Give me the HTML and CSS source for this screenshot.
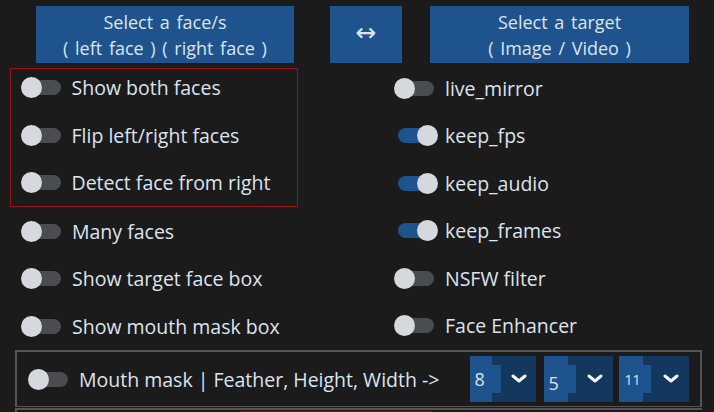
FILE: index.html
```html
<!DOCTYPE html>
<html>
<head>
<meta charset="utf-8">
<link rel="stylesheet" href="styles.css">
</head>
<body>
<div class="top">
  <div class="btn btn-wide">Select a face/s<br>( left face ) ( right face )</div>
  <div class="btn btn-swap">&#8596;</div>
  <div class="btn btn-wide btn-target">Select a target<br>( Image / Video )</div>
</div>
<div class="main">
  <div class="col col-left">
    <div class="redbox">
      <div class="row"><span class="sw"><span class="knob"></span></span><span class="lbl">Show both faces</span></div>
      <div class="row"><span class="sw"><span class="knob"></span></span><span class="lbl">Flip left/right faces</span></div>
      <div class="row"><span class="sw"><span class="knob"></span></span><span class="lbl">Detect face from right</span></div>
    </div>
    <div class="rows-out">
      <div class="row"><span class="sw"><span class="knob"></span></span><span class="lbl">Many faces</span></div>
      <div class="row"><span class="sw"><span class="knob"></span></span><span class="lbl">Show target face box</span></div>
      <div class="row"><span class="sw"><span class="knob"></span></span><span class="lbl">Show mouth mask box</span></div>
    </div>
  </div>
  <div class="col col-right">
    <div class="row"><span class="sw"><span class="knob"></span></span><span class="lbl">live_mirror</span></div>
    <div class="row"><span class="sw on"><span class="knob"></span></span><span class="lbl">keep_fps</span></div>
    <div class="row"><span class="sw on"><span class="knob"></span></span><span class="lbl">keep_audio</span></div>
    <div class="row"><span class="sw on"><span class="knob"></span></span><span class="lbl">keep_frames</span></div>
    <div class="row"><span class="sw"><span class="knob"></span></span><span class="lbl">NSFW filter</span></div>
    <div class="row"><span class="sw"><span class="knob"></span></span><span class="lbl">Face Enhancer</span></div>
  </div>
</div>
<div class="mouth">
  <span class="sw"><span class="knob"></span></span>
  <span class="lbl mlbl">Mouth mask | Feather, Height, Width -&gt;</span>
  <div class="dds">
    <div class="dd dd1"><div class="dd-val"><span class="num">8</span></div><div class="dd-arrow"><svg width="16" height="9" viewBox="0 0 16 9"><polyline points="2,2 8,7 14,2" fill="none" stroke="#f2f4f6" stroke-width="3" stroke-linecap="round" stroke-linejoin="round"/></svg></div></div>
    <div class="dd dd2"><div class="dd-val"><span class="num num5">5</span></div><div class="dd-arrow"><svg width="16" height="9" viewBox="0 0 16 9"><polyline points="2,2 8,7 14,2" fill="none" stroke="#f2f4f6" stroke-width="3" stroke-linecap="round" stroke-linejoin="round"/></svg></div></div>
    <div class="dd dd3"><div class="dd-val"><span class="num num11">11</span></div><div class="dd-arrow"><svg width="16" height="9" viewBox="0 0 16 9"><polyline points="2,2 8,7 14,2" fill="none" stroke="#f2f4f6" stroke-width="3" stroke-linecap="round" stroke-linejoin="round"/></svg></div></div>
  </div>
</div>
<div class="next">
  <div class="next-red"></div>
</div>
</body>
</html>
```
FILE: styles.css
```css
* { box-sizing: border-box; }
html, body {
  margin: 0;
  padding: 0;
  background: #1b1b1b;
  width: 714px;
  height: 412px;
  overflow: hidden;
  font-family: "Open Sans", "Noto Sans", sans-serif;
  color: #dce4ee;
}
.top {
  display: flex;
  padding: 6px 0 0 36px;
  height: 63px;
}
.btn {
  background: #1f538d;
  height: 57px;
  display: flex;
  align-items: center;
  justify-content: center;
  text-align: center;
  font-size: 18px;
  word-spacing: 2px;
  line-height: 26px;
  color: #dce4ee;
}
.btn-wide { width: 258px; }
.btn-swap {
  width: 72px;
  margin-left: 36px;
  font-family: "DejaVu Sans", sans-serif;
  font-size: 25px;
  padding-bottom: 3px;
}
.btn-target { width: 259px; margin-left: 28px; }

.main {
  display: flex;
  padding: 5px 0 0 10px;
}
.col-left { width: 288px; }
.redbox {
  border: 1.5px solid #9b1111;
  padding: 0.5px 0 4px 9.5px;
  display: flex;
  flex-direction: column;
  gap: 11.5px;
  height: 139px;
}
.rows-out {
  display: flex;
  flex-direction: column;
  gap: 11.5px;
  padding: 6px 0 0 11px;
}
.col-right {
  margin-left: 96px;
  padding-top: 2px;
  display: flex;
  flex-direction: column;
  gap: 11.5px;
}
.row {
  height: 36px;
  display: flex;
  align-items: center;
}
.sw {
  position: relative;
  width: 40px;
  height: 21px;
  display: inline-flex;
  align-items: center;
  flex: none;
}
.sw::before {
  content: "";
  display: block;
  margin-left: 4px;
  width: 36px;
  height: 15px;
  border-radius: 8px;
  background: #4a4d50;
}
.knob {
  position: absolute;
  left: 0;
  top: 0;
  width: 21px;
  height: 21px;
  border-radius: 50%;
  background: #d5d9de;
}
.sw.on { margin-left: 4px; margin-right: -4px; }
.sw.on::before { margin-left: 0; width: 36px; background: #1f538d; }
.sw.on .knob { left: auto; right: 0; }
.lbl {
  margin-left: 11px;
  font-size: 19.5px;
  white-space: nowrap;
}

.mouth {
  margin: 6px 12px 0 15px;
  height: 57px;
  border: 2px solid #545454;
  border-bottom-width: 1.5px;
  display: flex;
  align-items: center;
  padding-left: 11px;
}
.mlbl { margin-left: 11px; }
.dds {
  display: flex;
  margin-left: 31px;
  align-items: center;
}
.dd {
  height: 46px;
  background: #14375e;
  display: flex;
}
.dd1 { width: 66px; }
.dd2 { width: 69px; margin-left: 8px; }
.dd3 { width: 70px; margin-left: 6px; }
.dd-val {
  width: 22px;
  background: #1f538d;
  display: flex;
  align-items: center;
  flex: none;
}
.dd2 .dd-val, .dd3 .dd-val { width: 24px; }
.num {
  background: #1f538d;
  height: 28px;
  width: 31px;
  flex: none;
  display: flex;
  align-items: center;
  padding-left: 4px;
  font-size: 18px;
  line-height: 1;
}
.dd2 .num, .dd3 .num { width: 32px; }
.num5 { padding-top: 7px; }
.num11 { font-size: 14px; padding-left: 5px; padding-top: 2px; }
.dd-arrow {
  flex: 1;
  display: flex;
  align-items: center;
  justify-content: center;
  padding-left: 9px;
  padding-bottom: 2px;
}
.next {
  margin: 1px 12px 0 15px;
  border-top: 2px solid #545454;
  border-left: 2px solid #545454;
  height: 10px;
  padding-left: 223px;
  padding-top: 1px;
}
.next-red {
  width: 192px;
  height: 4px;
  border-top: 2px solid #9b1111;
}
```
